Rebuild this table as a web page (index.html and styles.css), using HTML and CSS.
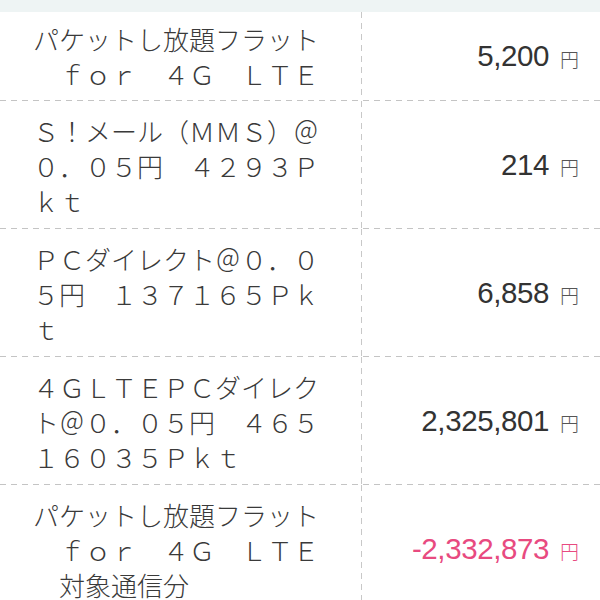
FILE: index.html
```html
<!DOCTYPE html>
<html lang="ja">
<head>
<meta charset="utf-8">
<link rel="stylesheet" href="styles.css">
</head>
<body>
<div class="strip"></div>
<div class="table">
  <div class="row first">
    <div class="name">パケットし放題フラット<br>　ｆｏｒ　４Ｇ　ＬＴＥ</div>
    <div class="amt"><span class="num">5,200</span><span class="yen">円</span></div>
  </div>
  <div class="row">
    <div class="name">Ｓ！メール（ＭＭＳ）＠<br>０．０５円　４２９３Ｐ<br>ｋｔ</div>
    <div class="amt"><span class="num">214</span><span class="yen">円</span></div>
  </div>
  <div class="row">
    <div class="name">ＰＣダイレクト＠０．０<br>５円　１３７１６５Ｐｋ<br>ｔ</div>
    <div class="amt"><span class="num">6,858</span><span class="yen">円</span></div>
  </div>
  <div class="row">
    <div class="name">４ＧＬＴＥＰＣダイレク<br>ト＠０．０５円　４６５<br>１６０３５Ｐｋｔ</div>
    <div class="amt"><span class="num">2,325,801</span><span class="yen">円</span></div>
  </div>
  <div class="row">
    <div class="name">パケットし放題フラット<br>　ｆｏｒ　４Ｇ　ＬＴＥ<br>　対象通信分</div>
    <div class="amt minus"><span class="num">-2,332,873</span><span class="yen">円</span></div>
  </div>
</div>
</body>
</html>
```
FILE: styles.css
```css
html, body {
  margin: 0;
  padding: 0;
  background: #ffffff;
}
body {
  width: 600px;
  height: 600px;
  overflow: hidden;
  font-family: "Noto Sans CJK JP", "Noto Sans", sans-serif;
  color: #333333;
}
.strip {
  height: 12px;
  background: #eef4f4;
}
.row {
  display: grid;
  grid-template-columns: 362px 1fr;
  background-image: linear-gradient(to right, #c4c4c4 0 6px, transparent 6px 11px);
  background-size: 11px 1px;
  background-repeat: repeat-x;
  background-position: 0 100%;
  padding-bottom: 1px;
}
.name {
  font-size: 26px;
  line-height: 35px;
  font-weight: 300;
  color: #3a3a3a;
  padding: 12px 0 10px 33px;
  white-space: nowrap;
  background-image: linear-gradient(to bottom, #c8c8c8 0 6px, transparent 6px 11px);
  background-size: 1px 11px;
  background-repeat: repeat-y;
  background-position: 100% 0;
}
.row.first .name {
  padding-top: 9px;
  padding-bottom: 9px;
}
.amt {
  display: flex;
  align-items: center;
  justify-content: flex-end;
  padding-right: 21px;
  color: #333333;
}
.num {
  font-family: "Liberation Sans", Arial, sans-serif;
  font-size: 29.5px;
  letter-spacing: -0.4px;
}
.yen {
  font-family: "Noto Sans CJK JP", sans-serif;
  font-size: 19px;
  font-weight: 300;
  color: #555555;
  margin-left: 11px;
  position: relative;
  top: 2px;
}
.minus .num,
.minus .yen {
  color: #e84a80;
}
```
